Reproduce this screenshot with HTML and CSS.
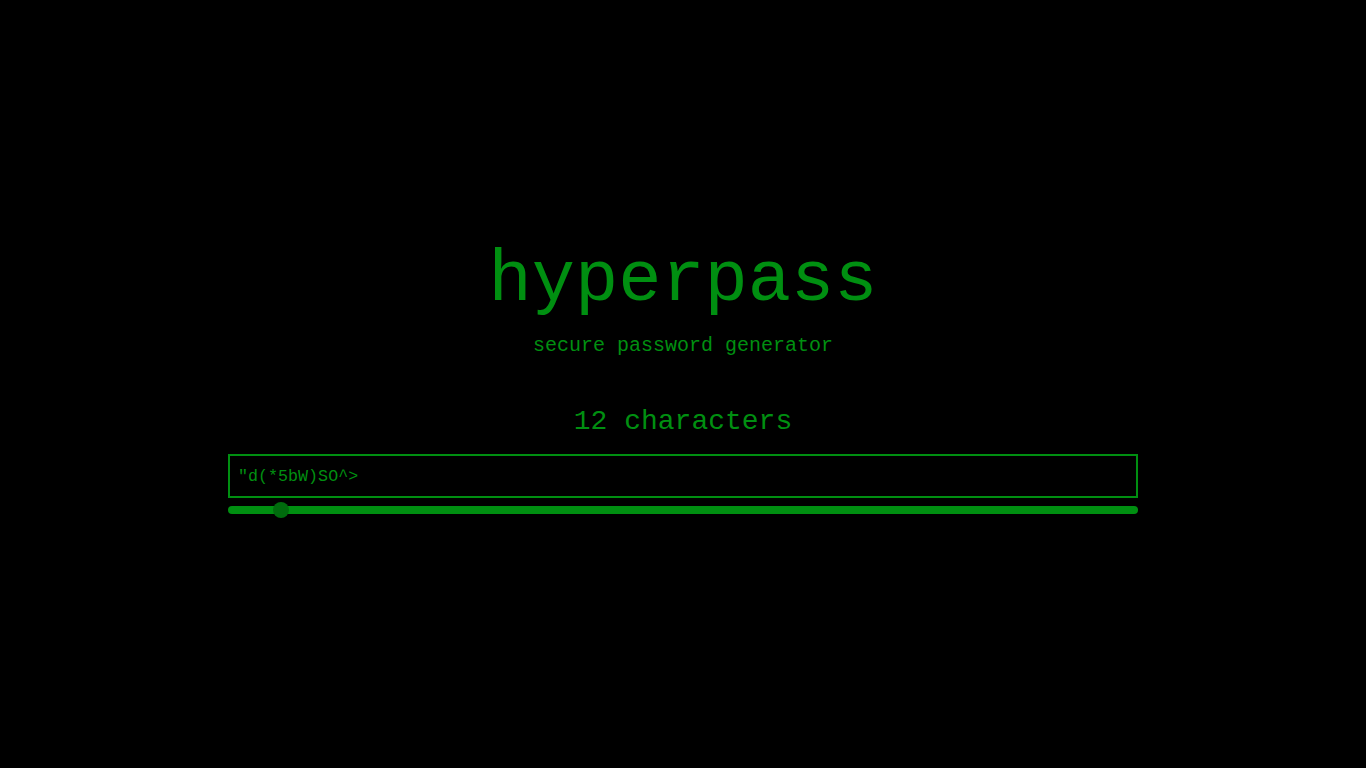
FILE: index.html
```html
<!DOCTYPE html>
<html>
<head>
<meta charset="utf-8">
<link rel="stylesheet" href="styles.css">
</head>
<body>
<main class="app">
  <h1 class="title">hyperpass</h1>
  <p class="subtitle">secure password generator</p>
  <div class="count">12 characters</div>
  <div class="output">"d(*5bW)SO^&gt;</div>
  <div class="slider">
    <div class="thumb" style="left: 53px"></div>
  </div>
</main>
</body>
</html>
```
FILE: styles.css
```css
html, body {
  margin: 0;
  padding: 0;
  background: #000;
}
body {
  font-family: "Liberation Mono", "Courier New", monospace;
  color: #008f11;
}
.app {
  box-sizing: border-box;
  min-height: 100vh;
  padding-bottom: 10px;
  display: flex;
  flex-direction: column;
  align-items: center;
  justify-content: center;
}
.title {
  margin: 0;
  font-size: 72px;
  font-weight: normal;
  line-height: 1;
}
.subtitle {
  margin: 19px 0 0;
  font-size: 20px;
  line-height: 1;
}
.count {
  margin-top: 52px;
  font-size: 28px;
  line-height: 1;
}
.output {
  margin-top: 18px;
  box-sizing: border-box;
  width: 910px;
  height: 44px;
  border: 2px solid #008f11;
  padding: 2px 8px 0;
  display: flex;
  align-items: center;
  font-size: 16.7px;
}
.slider {
  position: relative;
  margin-top: 8px;
  width: 910px;
  height: 8px;
  border-radius: 4px;
  background: #008f11;
}
.thumb {
  position: absolute;
  top: -4px;
  width: 16px;
  height: 16px;
  margin-left: -8px;
  border-radius: 50%;
  background: #006b0d;
}
```
